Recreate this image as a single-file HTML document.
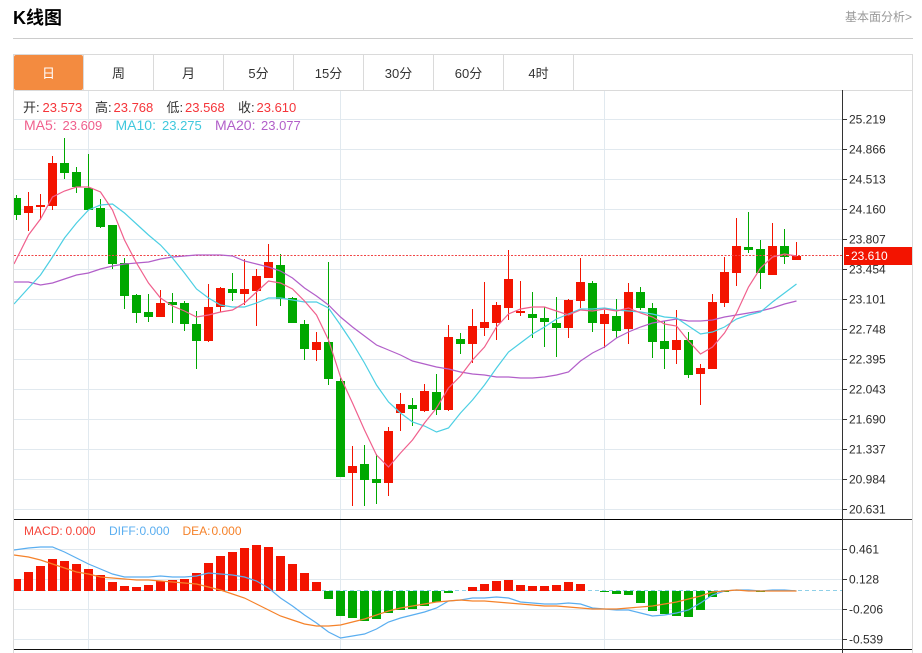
<!DOCTYPE html>
<html><head><meta charset="utf-8"><style>
html,body{margin:0;padding:0;background:#fff;width:922px;height:653px;overflow:hidden}
svg{display:block;position:absolute;left:0;top:0}
text{font-family:"Liberation Sans","Noto Sans CJK SC",sans-serif}
.ax text{font-size:12px;fill:#2b2b2b}
.tab{font-size:13px;fill:#333;text-anchor:middle}
</style></head><body>
<svg width="922" height="653" viewBox="0 0 922 653" xmlns="http://www.w3.org/2000/svg">
<text x="13" y="24" style="font-size:18px;font-weight:bold" fill="#000">K线图</text>
<text x="845" y="21" style="font-size:12px" fill="#999">基本面分析&gt;</text>
<g shape-rendering="crispEdges">
<rect x="13" y="38" width="900" height="1" fill="#ccc"/>
<path d="M13.5 54V653M912.5 54V653M13 54.5H913M13 90.5H913M83.5 54V90M153.5 54V90M223.5 54V90M293.5 54V90M363.5 54V90M433.5 54V90M503.5 54V90M573.5 54V90" stroke="#dadada" fill="none"/>
<path d="M14 119.5H842M14 149.5H842M14 179.5H842M14 209.5H842M14 239.5H842M14 269.5H842M14 299.5H842M14 329.5H842M14 359.5H842M14 389.5H842M14 419.5H842M14 449.5H842M14 479.5H842M14 509.5H842M14 549.5H842M14 579.5H842M14 609.5H842M14 639.5H842M88.5 91V649M340.5 91V649M604.5 91V649" stroke="#e1e9ef" fill="none"/>
</g>
<rect x="14" y="55" width="69" height="35" rx="2" fill="#f38b40"/>
<text class="tab" x="48.5" y="78" fill="#fff" style="fill:#fff">日</text>
<text class="tab" x="118.5" y="78">周</text>
<text class="tab" x="188.5" y="78">月</text>
<text class="tab" x="258.5" y="78">5分</text>
<text class="tab" x="328.5" y="78">15分</text>
<text class="tab" x="398.5" y="78">30分</text>
<text class="tab" x="468.5" y="78">60分</text>
<text class="tab" x="538.5" y="78">4时</text>

<svg x="14" y="91" width="828" height="428" viewBox="14 91 828 428" overflow="hidden">
<g shape-rendering="crispEdges">
<path fill="none" stroke="#f31400" d="M28.5 192V231M40.5 194V220M52.5 156V210M160.5 290V317M208.5 284V342M220.5 287V312M244.5 259V305M256.5 269V326M268.5 244V278M316.5 332V361M352.5 446V506M388.5 427V496M400.5 393V431M424.5 384V412M448.5 325V411M472.5 309V363M484.5 282V336M496.5 302V340M508.5 250V320M520.5 281V316M568.5 299V338M580.5 258V308M604.5 310V348M628.5 283V344M676.5 310V364M700.5 364V405M712.5 294V369M724.5 257V307M736.5 218V286M772.5 223V275M796.5 242V260"/>
<path fill="#f31400" d="M24 206h9v7h-9zM36 205h9v2h-9zM48 163h9v43h-9zM156 303h9v14h-9zM204 307h9v34h-9zM216 288h9v19h-9zM240 289h9v5h-9zM252 276h9v15h-9zM264 262h9v16h-9zM312 342h9v8h-9zM348 466h9v7h-9zM384 431h9v52h-9zM396 404h9v9h-9zM420 391h9v20h-9zM444 337h9v73h-9zM468 326h9v18h-9zM480 322h9v6h-9zM492 305h9v18h-9zM504 279h9v29h-9zM516 311h9v2h-9zM564 300h9v28h-9zM576 282h9v19h-9zM600 314h9v10h-9zM624 292h9v37h-9zM672 340h9v10h-9zM696 368h9v6h-9zM708 302h9v67h-9zM720 272h9v31h-9zM732 246h9v27h-9zM768 246h9v29h-9zM792 256h9v4h-9z"/>
<path fill="none" stroke="#00a800" d="M16.5 195V220M64.5 138V179M76.5 167V193M88.5 154V210M100.5 199V228M112.5 225V269M124.5 258V309M136.5 294V323M148.5 294V322M172.5 293V323M184.5 301V331M196.5 311V369M232.5 273V301M280.5 254V306M292.5 297V323M304.5 320V360M328.5 262V385M340.5 378V477M364.5 445V506M376.5 454V504M412.5 398V426M436.5 374V415M460.5 333V354M532.5 292V338M544.5 307V347M556.5 297V357M592.5 281V332M616.5 299V338M640.5 287V310M652.5 303V358M664.5 321V369M688.5 332V378M748.5 212V253M760.5 240V289M784.5 229V264"/>
<path fill="#00a800" d="M12 198h9v17h-9zM60 163h9v10h-9zM72 172h9v15h-9zM84 188h9v22h-9zM96 208h9v19h-9zM108 225h9v39h-9zM120 263h9v33h-9zM132 295h9v18h-9zM144 312h9v5h-9zM168 302h9v3h-9zM180 303h9v21h-9zM192 324h9v17h-9zM228 289h9v4h-9zM276 265h9v34h-9zM288 298h9v25h-9zM300 324h9v25h-9zM324 342h9v37h-9zM336 381h9v96h-9zM360 464h9v16h-9zM372 479h9v4h-9zM408 405h9v4h-9zM432 392h9v18h-9zM456 339h9v5h-9zM528 314h9v4h-9zM540 318h9v4h-9zM552 323h9v5h-9zM588 283h9v40h-9zM612 316h9v15h-9zM636 292h9v16h-9zM648 308h9v34h-9zM660 341h9v8h-9zM684 340h9v35h-9zM744 247h9v3h-9zM756 249h9v24h-9zM780 246h9v11h-9z"/>
</g>
<path d="M14 255.5H843" stroke="#f04545" stroke-width="1" stroke-dasharray="2 1.5" fill="none"/>
<polyline fill="none" stroke="#b25fc9" stroke-width="1.2" points="14,282 28.5,282 40.5,285 52.5,283 64.5,279 76.5,275 88.5,273 100.5,269 112.5,266 124.5,264 136.5,263 148.5,262 160.5,259 172.5,257 184.5,256 196.5,255 208.5,255 220.5,255 232.5,256 244.5,261 256.5,264 268.5,267 280.5,271 292.5,278 304.5,288 316.5,296 328.5,305 340.5,317 352.5,327 364.5,336 376.5,345 388.5,350 400.5,355 412.5,361 424.5,364 436.5,367 448.5,369 460.5,372 472.5,374 484.5,375 496.5,377 508.5,377 520.5,378 532.5,378 544.5,377 556.5,375 568.5,372 580.5,361 592.5,353 604.5,347 616.5,338 628.5,332 640.5,327 652.5,323 664.5,321 676.5,319 688.5,321 700.5,321 712.5,320 724.5,317 736.5,315 748.5,313 760.5,311 772.5,308 784.5,304 796.5,301"/>
<polyline fill="none" stroke="#4ccfe3" stroke-width="1.2" points="14,304 28.5,288 40.5,275 52.5,257 64.5,238 76.5,223 88.5,210 100.5,205 112.5,204 124.5,213 136.5,224 148.5,235 160.5,245 172.5,258 184.5,273 196.5,289 208.5,298 220.5,305 232.5,307 244.5,307 256.5,303 268.5,298 280.5,298 292.5,300 304.5,302 316.5,302 328.5,308 340.5,325 352.5,343 364.5,363 376.5,385 388.5,402 400.5,413 412.5,422 424.5,426 436.5,432 448.5,428 460.5,413 472.5,400 484.5,385 496.5,368 508.5,352 520.5,343 532.5,334 544.5,327 556.5,319 568.5,314 580.5,309 592.5,309 604.5,308 616.5,310 628.5,311 640.5,312 652.5,314 664.5,317 676.5,318 688.5,326 700.5,334 712.5,332 724.5,327 736.5,319 748.5,315 760.5,312 772.5,302 784.5,293 796.5,284"/>
<polyline fill="none" stroke="#f0608d" stroke-width="1.2" points="14,264 28.5,235 40.5,219 52.5,197 64.5,191 76.5,187 88.5,187 100.5,192 112.5,210 124.5,240 136.5,263 148.5,283 160.5,298 172.5,306 184.5,311 196.5,317 208.5,315 220.5,312 232.5,310 244.5,303 256.5,292 268.5,281 280.5,283 292.5,289 304.5,301 316.5,315 328.5,340 340.5,377 352.5,403 364.5,430 376.5,455 388.5,467 400.5,453 412.5,440 424.5,423 436.5,408 448.5,388 460.5,376 472.5,360 484.5,347 496.5,327 508.5,314 520.5,309 532.5,307 544.5,307 556.5,311 568.5,315 580.5,310 592.5,311 604.5,309 616.5,311 628.5,308 640.5,313 652.5,317 664.5,324 676.5,326 688.5,341 700.5,354 712.5,347 724.5,333 736.5,313 748.5,287 760.5,268 772.5,257 784.5,254 796.5,256"/>
</svg>

<svg x="14" y="520" width="828" height="129" viewBox="14 520 828 129" overflow="hidden">
<path d="M14 590.5H842" stroke="#8fd0e8" stroke-dasharray="4 3" fill="none" shape-rendering="crispEdges"/>
<g shape-rendering="crispEdges">
<path fill="#f31400" d="M12 579h9v12h-9zM24 572h9v19h-9zM36 566h9v25h-9zM48 559h9v32h-9zM60 561h9v30h-9zM72 564h9v27h-9zM84 569h9v22h-9zM96 575h9v16h-9zM108 582h9v9h-9zM120 586h9v5h-9zM132 587h9v4h-9zM144 585h9v6h-9zM156 581h9v10h-9zM168 580h9v11h-9zM180 579h9v12h-9zM192 573h9v18h-9zM204 563h9v28h-9zM216 556h9v35h-9zM228 552h9v39h-9zM240 548h9v43h-9zM252 545h9v46h-9zM264 547h9v44h-9zM276 556h9v35h-9zM288 564h9v27h-9zM300 573h9v18h-9zM312 582h9v9h-9zM468 587h9v4h-9zM480 584h9v7h-9zM492 581h9v10h-9zM504 580h9v11h-9zM516 585h9v6h-9zM528 586h9v5h-9zM540 586h9v5h-9zM552 585h9v6h-9zM564 582h9v9h-9zM576 584h9v7h-9z"/>
<path fill="#00a800" d="M324 591h9v8h-9zM336 591h9v25h-9zM348 591h9v27h-9zM360 591h9v30h-9zM372 591h9v28h-9zM384 591h9v22h-9zM396 591h9v19h-9zM408 591h9v18h-9zM420 591h9v15h-9zM432 591h9v11h-9zM444 591h9v2h-9zM600 591h9v1h-9zM612 591h9v3h-9zM624 591h9v4h-9zM636 591h9v12h-9zM648 591h9v20h-9zM660 591h9v23h-9zM672 591h9v25h-9zM684 591h9v26h-9zM696 591h9v19h-9zM708 591h9v6h-9zM720 591h9v1h-9zM756 591h9v1h-9z"/>
</g>
<polyline fill="none" stroke="#5aaef0" stroke-width="1.2" points="14,550 28.5,548 40.5,547 52.5,547 64.5,552 76.5,558 88.5,564 100.5,569 112.5,574 124.5,577 136.5,577 148.5,577 160.5,576 172.5,577 184.5,577 196.5,576 208.5,573 220.5,574 232.5,575 244.5,577 256.5,581 268.5,588 280.5,598 292.5,606 304.5,615 316.5,623 328.5,632 340.5,638 352.5,636 364.5,634 376.5,629 388.5,622 400.5,618 412.5,615 424.5,612 436.5,608 448.5,601 460.5,600 472.5,598 484.5,598 496.5,597 508.5,598 520.5,602 532.5,603 544.5,604 556.5,604 568.5,603 580.5,604 592.5,608 604.5,609 616.5,610 628.5,610 640.5,613 652.5,616 664.5,615 676.5,613 688.5,610 700.5,603 712.5,595 724.5,591 736.5,590 748.5,590 760.5,591 772.5,590 784.5,590 796.5,591"/>
<polyline fill="none" stroke="#f5822a" stroke-width="1.2" points="14,555 28.5,557 40.5,560 52.5,564 64.5,568 76.5,572 88.5,574 100.5,577 112.5,578 124.5,579 136.5,580 148.5,580 160.5,581 172.5,582 184.5,583 196.5,584 208.5,587 220.5,590 232.5,594 244.5,598 256.5,604 268.5,610 280.5,616 292.5,620 304.5,624 316.5,626 328.5,626 340.5,625 352.5,622 364.5,619 376.5,615 388.5,611 400.5,608 412.5,606 424.5,604 436.5,602 448.5,601 460.5,600 472.5,601 484.5,601 496.5,602 508.5,603 520.5,604 532.5,605 544.5,606 556.5,606 568.5,607 580.5,608 592.5,609 604.5,609 616.5,609 628.5,608 640.5,607 652.5,606 664.5,604 676.5,602 688.5,599 700.5,596 712.5,592 724.5,591 736.5,590 748.5,591 760.5,591 772.5,591 784.5,591 796.5,591"/>
</svg>

<g shape-rendering="crispEdges">
<rect x="14" y="519" width="829" height="1" fill="#000"/>
<rect x="843" y="519" width="69" height="1" fill="#333"/>
<rect x="14" y="649" width="898" height="1" fill="#111"/>
<rect x="842" y="90" width="1" height="563" fill="#333"/>
<path d="M843 119.5h4M843 149.5h4M843 179.5h4M843 209.5h4M843 239.5h4M843 269.5h4M843 299.5h4M843 329.5h4M843 359.5h4M843 389.5h4M843 419.5h4M843 449.5h4M843 479.5h4M843 509.5h4M843 549.5h4M843 579.5h4M843 609.5h4M843 639.5h4" stroke="#333" fill="none"/>
</g>
<g class="ax">
<text x="849" y="123.5">25.219</text><text x="849" y="153.5">24.866</text><text x="849" y="183.5">24.513</text><text x="849" y="213.5">24.160</text><text x="849" y="243.5">23.807</text><text x="849" y="273.5">23.454</text><text x="849" y="303.5">23.101</text><text x="849" y="333.5">22.748</text><text x="849" y="363.5">22.395</text><text x="849" y="393.5">22.043</text><text x="849" y="423.5">21.690</text><text x="849" y="453.5">21.337</text><text x="849" y="483.5">20.984</text><text x="849" y="513.5">20.631</text>
<text x="849" y="553.5">0.461</text><text x="849" y="583.5">0.128</text><text x="849" y="613.5">-0.206</text><text x="849" y="643.5">-0.539</text>
</g>
<rect x="844" y="247" width="68" height="18" fill="#f31400" shape-rendering="crispEdges"/>
<rect x="846" y="255" width="3" height="1" fill="#fff" shape-rendering="crispEdges"/>
<text x="851" y="260" style="font-size:12px" fill="#fff">23.610</text>

<g style="font-size:13px">
<text x="23" y="112" fill="#333">开:</text><text x="42.5" y="112" fill="#f5353a">23.573</text>
<text x="95" y="112" fill="#333">高:</text><text x="113.5" y="112" fill="#f5353a">23.768</text>
<text x="166.5" y="112" fill="#333">低:</text><text x="185" y="112" fill="#f5353a">23.568</text>
<text x="238" y="112" fill="#333">收:</text><text x="256.5" y="112" fill="#f5353a">23.610</text>
<text x="24" y="130" fill="#f0608d" style="font-size:14px">MA5:</text><text x="62.5" y="130" fill="#f0608d">23.609</text>
<text x="115.5" y="130" fill="#40c8dd" style="font-size:14px">MA10:</text><text x="162" y="130" fill="#40c8dd">23.275</text>
<text x="215" y="130" fill="#b25fc9" style="font-size:14px">MA20:</text><text x="261" y="130" fill="#b25fc9">23.077</text>
</g>
<g style="font-size:12px">
<text x="24" y="535" fill="#f5453a">MACD:</text><text x="65.5" y="535" fill="#f5453a">0.000</text>
<text x="109" y="535" fill="#5aaef0">DIFF:</text><text x="139.5" y="535" fill="#5aaef0">0.000</text>
<text x="182.5" y="535" fill="#f5822a">DEA:</text><text x="211.5" y="535" fill="#f5822a">0.000</text>
</g>
</svg>
</body></html>
